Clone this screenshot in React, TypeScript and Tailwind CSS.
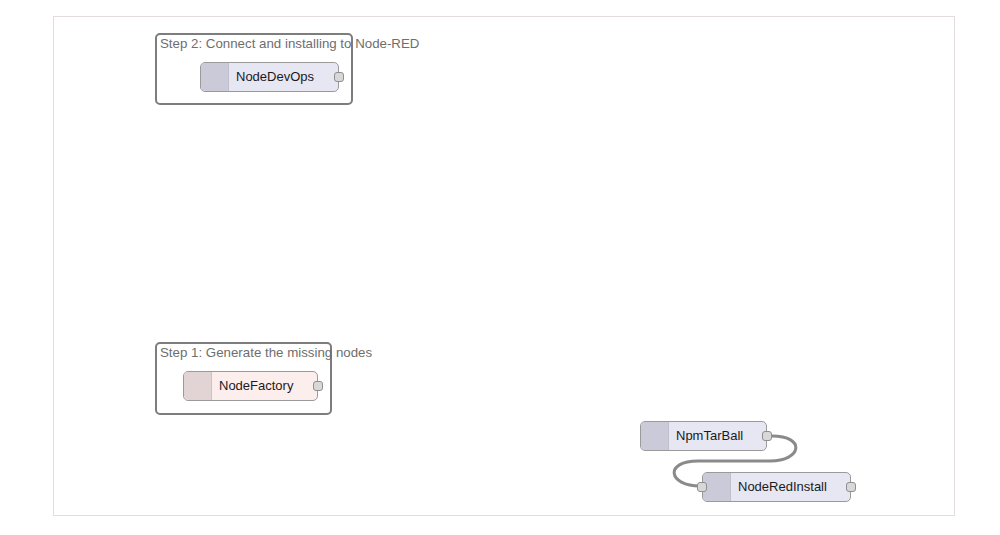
import React from 'react';

type NodeProps = {
  label: string;
  left: number;
  top: number;
  width: number;
  tone: 'lilac' | 'rose';
  input?: boolean;
  output?: boolean;
};

const tones = {
  lilac: { body: 'bg-[#e7e6f3]', icon: 'bg-[#cbcad8]' },
  rose: { body: 'bg-[#fdeeee]', icon: 'bg-[#e2d4d4]' },
};

const Port: React.FC<{ side: 'left' | 'right' }> = ({ side }) => (
  <div
    className={`absolute top-1/2 -translate-y-1/2 w-[10px] h-[10px] rounded-[3px] border border-[#8f8f8f] bg-[#d8d8d8] ${
      side === 'left' ? '-left-[5px]' : '-right-[5px]'
    }`}
  />
);

const FlowNode: React.FC<NodeProps> = ({ label, left, top, width, tone, input, output }) => (
  <div className="absolute h-[30px]" style={{ left, top, width }}>
    <div className={`flex h-full rounded-[5px] border border-[#9a9a9a] overflow-hidden ${tones[tone].body}`}>
      <div className={`w-[28px] shrink-0 border-r border-[#b9b8c4]/60 ${tones[tone].icon}`} />
      <div className="flex items-center pl-[7px] text-[13px] text-[#1a1a1a]">{label}</div>
    </div>
    {input && <Port side="left" />}
    {output && <Port side="right" />}
  </div>
);

const Group: React.FC<{ label: string; left: number; top: number; width: number; height: number }> = ({
  label,
  left,
  top,
  width,
  height,
}) => (
  <div
    className="absolute rounded-[5px] border-2 border-[#7d7d7d]"
    style={{ left, top, width, height }}
  >
    <div className="absolute left-[3px] top-[1px] whitespace-nowrap text-[13.3px] leading-[16px] text-[#6e6e6e]">
      {label}
    </div>
  </div>
);

export default function App() {
  return (
    <div className="min-h-[535px] bg-white pt-[16px] pl-[53px]" style={{ fontFamily: '"Liberation Sans", Arial, sans-serif' }}>
      <div className="relative w-[902px] h-[500px] border border-[#e3dbe0] overflow-hidden">
        <Group label="Step 2: Connect and installing to Node-RED" left={101} top={16} width={198} height={72} />
        <FlowNode label="NodeDevOps" left={146} top={45} width={139} tone="lilac" output />

        <Group label="Step 1: Generate the missing nodes" left={101} top={325} width={177} height={73} />
        <FlowNode label="NodeFactory" left={129} top={354} width={135} tone="rose" output />

        <svg className="absolute left-0 top-0" width="900" height="498">
          <path
            d="M718 419 C752 419 748 444 716 444 L644 444 C610 444 614 469 646 469"
            fill="none"
            stroke="#8a8a8a"
            strokeWidth="3"
          />
        </svg>

        <FlowNode label="NpmTarBall" left={586} top={404} width={127} tone="lilac" output />
        <FlowNode label="NodeRedInstall" left={648} top={455} width={149} tone="lilac" input output />
      </div>
    </div>
  );
}
